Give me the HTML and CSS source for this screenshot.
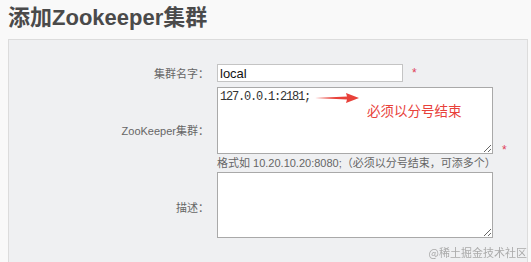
FILE: index.html
```html
<!DOCTYPE html>
<html lang="zh-CN">
<head>
<meta charset="utf-8">
<title>添加Zookeeper集群</title>
<link rel="stylesheet" href="styles.css">
</head>
<body>
<h1 class="title">添加Zookeeper集群</h1>
<div class="panel">
  <div class="row">
    <label class="label">集群名字：</label>
    <div class="field">
      <div class="line">
        <input class="input" type="text" value="local">
        <span class="req">*</span>
      </div>
    </div>
  </div>
  <div class="row">
    <label class="label">ZooKeeper集群：</label>
    <div class="field">
      <div class="line line-end">
        <div class="ta-wrap">
          <textarea class="ta ta-mono">127.0.0.1:2181;</textarea>
          <div class="note">
            <svg class="arrow" width="44" height="12" viewBox="0 0 44 12"><polygon points="0,6 32,4.6 31,1 44,6 31,11 32,7.4" fill="#e8413a"/></svg>
            <span class="note-text">必须以分号结束</span>
          </div>
        </div>
        <span class="req req-low">*</span>
      </div>
      <div class="help">格式如 10.20.10.20:8080;（必须以分号结束，可添多个）</div>
    </div>
  </div>
  <div class="row">
    <label class="label label-low">描述：</label>
    <div class="field">
      <textarea class="ta ta-desc"></textarea>
    </div>
  </div>
</div>
<div class="watermark">@稀土掘金技术社区</div>
</body>
</html>
```

FILE: styles.css
```css
html, body {
  margin: 0;
  padding: 0;
}
body {
  background: #f9f9f9;
  font-family: "Liberation Sans", "Noto Sans CJK SC", sans-serif;
  color: #555;
  height: 262px;
  overflow: hidden;
}
.title {
  margin: 0;
  padding: 5px 8px 0;
  font-size: 22px;
  line-height: 26px;
  font-weight: bold;
  color: #4a4a4a;
}
.panel {
  margin: 8px 3px 0 8px;
  border: 1px solid #dcdcdc;
  border-bottom: 0;
  background: #eff0f2;
  padding-top: 24px;
  height: 198px;
}
.row {
  display: flex;
  align-items: center;
}
.row + .row {
  margin-top: 5px;
}
.row:last-child {
  margin-top: 0;
}
.label {
  width: 200px;
  flex: none;
  text-align: right;
  font-size: 11px;
  color: #666;
}
.label-low {
  padding-top: 3px;
}
.field {
  margin-left: 8px;
}
.line {
  display: flex;
  align-items: center;
}
.line-end {
  align-items: flex-end;
}
.input {
  box-sizing: border-box;
  width: 186px;
  height: 18px;
  margin: 0;
  padding: 0 2px;
  border: 1px solid #c4c4c4;
  background: #fff;
  font-family: "Liberation Sans", sans-serif;
  font-size: 13px;
  color: #111;
  outline: none;
}
.req {
  margin-left: 9px;
  font-size: 12px;
  line-height: 18px;
  color: #e0405a;
}
.req-low {
  line-height: 8px;
}
.ta-wrap {
  position: relative;
}
.ta {
  display: block;
  box-sizing: border-box;
  width: 276px;
  margin: 0;
  padding: 2px;
  border: 1px solid #a9a9a9;
  background: #fff;
  outline: none;
  resize: both;
}
.ta-mono {
  height: 67px;
  font-family: "Liberation Mono", monospace;
  font-size: 12px;
  letter-spacing: -1.2px;
  line-height: 14px;
  color: #333;
}
.ta-desc {
  height: 66px;
}
.note {
  position: absolute;
  left: 98px;
  top: 5px;
  display: flex;
  align-items: flex-start;
}
.arrow {
  display: block;
}
.note-text {
  margin-left: 8px;
  margin-top: 8px;
  font-size: 13.5px;
  line-height: 20px;
  color: #e8413a;
  font-family: "Noto Sans CJK SC", sans-serif;
}
.help {
  font-size: 11px;
  line-height: 18px;
  color: #666;
  white-space: nowrap;
}
.watermark {
  position: fixed;
  right: 4px;
  bottom: 3px;
  font-family: "Noto Sans CJK SC", sans-serif;
  font-size: 11px;
  line-height: 14px;
  color: #aaa;
}
```
